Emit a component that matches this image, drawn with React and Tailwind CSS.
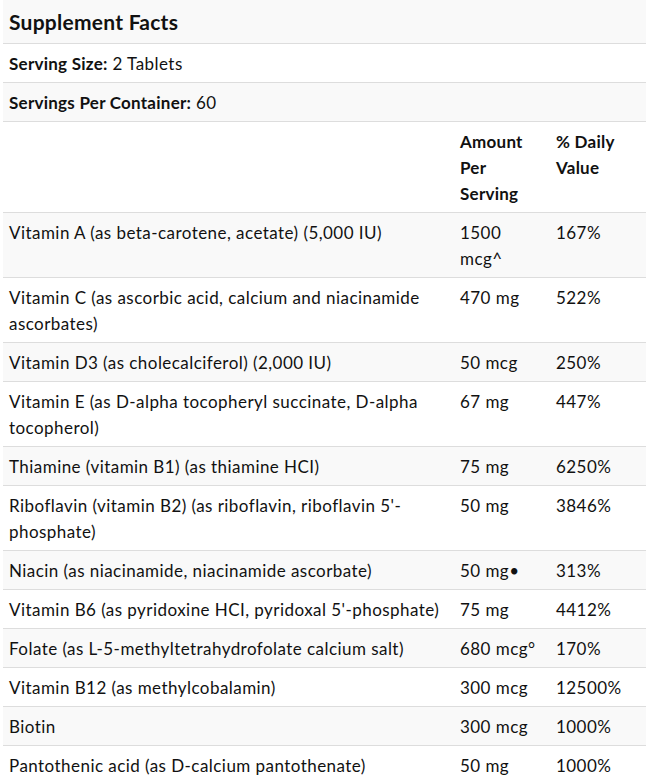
import React from "react";

const rows = [
  ["Vitamin A (as beta-carotene, acetate) (5,000 IU)", "1500 mcg^", "167%"],
  ["Vitamin C (as ascorbic acid, calcium and niacinamide ascorbates)", "470 mg", "522%"],
  ["Vitamin D3 (as cholecalciferol) (2,000 IU)", "50 mcg", "250%"],
  ["Vitamin E (as D-alpha tocopheryl succinate, D-alpha tocopherol)", "67 mg", "447%"],
  ["Thiamine (vitamin B1) (as thiamine HCI)", "75 mg", "6250%"],
  ["Riboflavin (vitamin B2) (as riboflavin, riboflavin 5'-phosphate)", "50 mg", "3846%"],
  ["Niacin (as niacinamide, niacinamide ascorbate)", "50 mg•", "313%"],
  ["Vitamin B6 (as pyridoxine HCI, pyridoxal 5'-phosphate)", "75 mg", "4412%"],
  ["Folate (as L-5-methyltetrahydrofolate calcium salt)", "680 mcg°", "170%"],
  ["Vitamin B12 (as methylcobalamin)", "300 mcg", "12500%"],
  ["Biotin", "300 mcg", "1000%"],
  ["Pantothenic acid (as D-calcium pantothenate)", "50 mg", "1000%"],
];

const cell = "px-[6px] pt-[7px] pb-[5px] align-top";
const bold = "font-bold tracking-[0.25px]";

export default function App() {
  return (
    <div className="bg-white min-h-screen pl-[3px] text-[#111] text-[17px] leading-[26px] tracking-[0.45px]" style={{ fontFamily: "Lato, 'Open Sans', sans-serif" }}>
      <table className="w-[643px] table-fixed border-collapse">
        <colgroup>
          <col className="w-[451px]" />
          <col className="w-[96px]" />
          <col className="w-[96px]" />
        </colgroup>
        <tbody>
          <tr className="bg-[#f9f9f9] border-b border-[#dddddd]">
            <td colSpan={3} className="px-[6px] pt-[6px] pb-[5px] text-[21px] leading-[32px] font-bold tracking-[0.25px]">Supplement Facts</td>
          </tr>
          <tr className="bg-white border-b border-[#dddddd]">
            <td colSpan={3} className={cell}><span className={bold}>Serving Size:</span> 2 Tablets</td>
          </tr>
          <tr className="bg-[#f9f9f9] border-b border-[#dddddd]">
            <td colSpan={3} className={cell}><span className={bold}>Servings Per Container:</span> 60</td>
          </tr>
          <tr className="bg-white border-b border-[#dddddd]">
            <td className={cell}></td>
            <td className={cell + " " + bold}>Amount<br />Per<br />Serving</td>
            <td className={cell + " " + bold}>% Daily<br />Value</td>
          </tr>
          {rows.map((r, i) => (
            <tr key={i} className={(i % 2 === 0 ? "bg-[#f9f9f9]" : "bg-white") + " border-b border-[#dddddd]"}>
              <td className={cell}>{r[0]}</td>
              <td className={cell}>
                {r[1] === "1500 mcg^" ? (<>1500<br />mcg^</>) : r[1]}
              </td>
              <td className={cell}>{r[2]}</td>
            </tr>
          ))}
        </tbody>
      </table>
    </div>
  );
}
